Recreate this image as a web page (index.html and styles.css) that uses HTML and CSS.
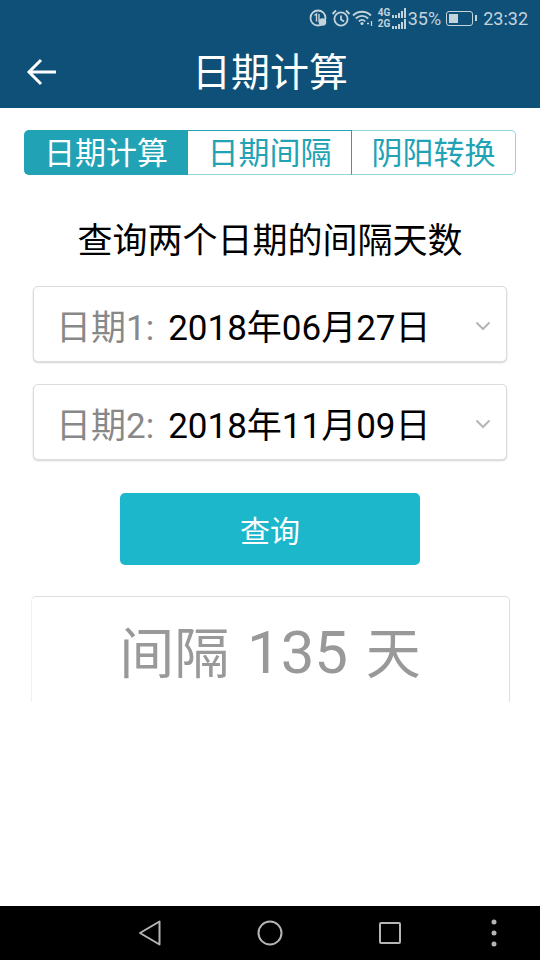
FILE: index.html
```html
<!DOCTYPE html>
<html lang="zh-CN">
<head>
    <meta charset="UTF-8">
    <meta name="viewport" content="width=device-width, initial-scale=1.0">
    <title>日期计算</title>
    <link rel="stylesheet" href="styles.css">
</head>
<body>
    <div class="app">
        <div class="header">
            <div class="status-bar">
                <svg class="st-icon" width="19" height="18" viewBox="0 0 19 18">
                    <circle cx="9" cy="9" r="7.500" fill="none" stroke="#c3d3dc" stroke-width="1.800"/>
                    <path d="M5.500 6.500 7.500 5V12.500M10 5V12H13" fill="none" stroke="#c3d3dc" stroke-width="1.400"/>
                    <circle cx="13.500" cy="13" r="3.800" fill="#c3d3dc"/>
                </svg>
                <svg class="st-icon alarm" width="20" height="18" viewBox="0 0 20 18">
                    <circle cx="10" cy="10" r="6.600" fill="none" stroke="#c3d3dc" stroke-width="1.800"/>
                    <path d="M10 6.500V10.500L13 12.500M1.500 5 5 1.500M18.500 5 15 1.500" fill="none" stroke="#c3d3dc" stroke-width="1.800"/>
                </svg>
                <svg class="st-icon" width="22" height="18" viewBox="0 0 22 18">
                    <path d="M1 6.500C6 1.500 14 1.500 19 6.500M3.800 9.500C7.500 6 12.500 6 16.200 9.500M6.800 12.300C8.800 10.500 11.200 10.500 13.200 12.300" fill="none" stroke="#c3d3dc" stroke-width="1.800"/>
                    <circle cx="10" cy="14.500" r="1.600" fill="#c3d3dc"/>
                    <path d="M15 14.500H17M19.500 12V17" fill="none" stroke="#c3d3dc" stroke-width="1.300"/>
                </svg>
                <div class="signal">
                    <div class="signal-row">
                        <span class="net">4G</span>
                        <i class="dot"></i><i class="dot"></i><i class="bar b1"></i><i class="bar b2"></i><i class="bar b3"></i>
                    </div>
                    <div class="signal-row">
                        <span class="net">2G</span>
                        <i class="dot"></i><i class="dot"></i><i class="bar b1"></i><i class="bar b2"></i><i class="bar b3"></i>
                    </div>
                </div>
                <span class="battery-text">35%</span>
                <div class="battery">
                    <div class="battery-body"><div class="battery-fill"></div></div>
                    <div class="battery-cap"></div>
                </div>
                <span class="clock">23:32</span>
            </div>
            <div class="toolbar">
                <svg class="back" width="32" height="28" viewBox="0 0 32 28">
                    <path d="M30 14H3M15 2 3 14 15 26" fill="none" stroke="#fff" stroke-width="3"/>
                </svg>
                <h1 class="title">日期计算</h1>
            </div>
        </div>

        <div class="content">
            <div class="tabs">
                <div class="tab active">日期计算</div>
                <div class="tab middle">日期间隔</div>
                <div class="tab last">阴阳转换</div>
            </div>

            <p class="subtitle">查询两个日期的间隔天数</p>

            <div class="field">
                <span class="field-label">日期1:</span>
                <span class="field-value">2018年06月27日</span>
                <svg class="chevron" width="16" height="10" viewBox="0 0 16 10">
                    <path d="M1.500 1.500 8 8 14.500 1.500" fill="none" stroke="#b5b5b5" stroke-width="2"/>
                </svg>
            </div>
            <div class="field">
                <span class="field-label">日期2:</span>
                <span class="field-value">2018年11月09日</span>
                <svg class="chevron" width="16" height="10" viewBox="0 0 16 10">
                    <path d="M1.500 1.500 8 8 14.500 1.500" fill="none" stroke="#b5b5b5" stroke-width="2"/>
                </svg>
            </div>

            <button class="query-btn">查询</button>

            <div class="result">间隔 <span class="result-num">135</span> 天</div>
        </div>

        <div class="nav-bar">
            <svg width="24" height="26" viewBox="0 0 24 26">
                <path d="M21.500 1.500V24.500L2 13Z" fill="none" stroke="#b5b5b5" stroke-width="2" stroke-linejoin="round"/>
            </svg>
            <svg width="26" height="26" viewBox="0 0 26 26">
                <circle cx="13" cy="13" r="11.500" fill="none" stroke="#b5b5b5" stroke-width="2"/>
            </svg>
            <svg width="24" height="24" viewBox="0 0 24 24">
                <rect x="2" y="2" width="20" height="20" rx="1" fill="none" stroke="#b5b5b5" stroke-width="2"/>
            </svg>
            <svg width="6" height="28" viewBox="0 0 6 28">
                <circle cx="3" cy="3" r="2.500" fill="#b5b5b5"/>
                <circle cx="3" cy="14" r="2.500" fill="#b5b5b5"/>
                <circle cx="3" cy="25" r="2.500" fill="#b5b5b5"/>
            </svg>
        </div>
    </div>
</body>
</html>
```

FILE: styles.css
```css
* {
    box-sizing: border-box;
}

body {
    margin: 0;
    font-family: Roboto, "Noto Sans CJK SC", sans-serif;
    background-color: #fff;
}

.app {
    display: flex;
    flex-direction: column;
    width: 540px;
    height: 960px;
    overflow: hidden;
}

.header {
    height: 108px;
    background-color: #0f5078;
    color: #fff;
}

/* status bar */
.status-bar {
    display: flex;
    justify-content: flex-end;
    align-items: center;
    height: 36px;
    padding-right: 12px;
    color: #c3d3dc;
}

.st-icon {
    margin-right: 3px;
}

.st-icon.alarm {
    margin-right: 1px;
}

.signal {
    display: flex;
    flex-direction: column;
    gap: 1px;
    margin-left: 1px;
}

.signal-row {
    display: flex;
    align-items: flex-end;
    gap: 1px;
    height: 10px;
}

.net {
    width: 12px;
    margin-right: 1px;
    font-size: 10px;
    font-weight: bold;
    line-height: 10px;
}

.dot {
    width: 2px;
    height: 3px;
    background-color: #c3d3dc;
}

.bar {
    width: 2px;
    background-color: #c3d3dc;
}

.b1 { height: 5px; }
.b2 { height: 7px; }
.b3 { height: 10px; }

.battery-text {
    margin-left: 2px;
    font-size: 18px;
}

.battery {
    display: flex;
    align-items: center;
    margin-left: 5px;
}

.battery-body {
    width: 27px;
    height: 15px;
    padding: 2px;
    border: 1px solid #c3d3dc;
    border-radius: 3px;
}

.battery-fill {
    width: 9px;
    height: 100%;
    background-color: #c3d3dc;
}

.battery-cap {
    width: 2px;
    height: 6px;
    margin-left: 2px;
    background-color: #c3d3dc;
}

.clock {
    margin-left: 6px;
    font-size: 18px;
}

/* toolbar */
.toolbar {
    display: grid;
    grid-template-columns: 1fr auto 1fr;
    align-items: center;
    height: 72px;
    padding-left: 26px;
}

.title {
    margin: 0 0 0 -26px;
    padding-top: 3px;
    font-size: 39px;
    font-weight: normal;
    line-height: 69px;
    color: #fff;
}

/* main */
.content {
    display: flex;
    flex-direction: column;
    align-items: center;
    flex: 1;
    padding-top: 22px;
}

.tabs {
    display: flex;
    width: 492px;
    height: 45px;
}

.tab {
    width: 164px;
    padding-top: 3px;
    font-size: 31px;
    line-height: 40px;
    text-align: center;
    color: #22a3b5;
    border-top: 1px solid #22a3b5;
    border-bottom: 1px solid #8fd3dd;
}

.tab.active {
    color: #fff;
    background-color: #22a3b5;
    border-color: #22a3b5;
    border-radius: 5px 0 0 5px;
}

.tab.middle {
    border-right: 1px solid #22a3b5;
}

.tab.last {
    border-top-color: #8fd3dd;
    border-right: 1px solid #8fd3dd;
    border-radius: 0 5px 5px 0;
}

.subtitle {
    margin: 46px 0 0;
    font-size: 35px;
    line-height: 42px;
    color: #000;
}

.field {
    display: flex;
    align-items: center;
    width: 474px;
    height: 76px;
    margin-top: 23px;
    padding: 0 15px 0 22px;
    background-color: #fff;
    border: 1px solid #dcdcdc;
    border-radius: 5px;
    box-shadow: 0 1px 2px rgba(0, 0, 0, 0.18);
}

.field + .field {
    margin-top: 22px;
}

.field-label {
    font-size: 35px;
    color: #888;
}

.field-value {
    flex: 1;
    margin-left: 14px;
    font-size: 35px;
    color: #000;
}

.chevron {
    margin-top: 4px;
}

.query-btn {
    width: 300px;
    height: 72px;
    margin-top: 33px;
    padding: 0;
    border: none;
    border-radius: 5px;
    font-family: inherit;
    font-size: 30px;
    color: #fff;
    background-color: #1cb7cb;
}

.result {
    width: 479px;
    height: 106px;
    margin-top: 31px;
    font-size: 55px;
    line-height: 112px;
    word-spacing: 4px;
    text-align: center;
    color: #999;
    border-top: 1px solid #dedede;
    border-left: 1px solid #f0f0f0;
    border-right: 1px solid #dedede;
    border-radius: 5px 5px 0 0;
}

.result-num {
    font-size: 60px;
}

/* system nav */
.nav-bar {
    display: grid;
    grid-template-columns: 120px 120px 120px 88px;
    justify-items: center;
    align-items: center;
    flex-shrink: 0;
    height: 54px;
    padding-left: 90px;
    background-color: #000;
}
```
